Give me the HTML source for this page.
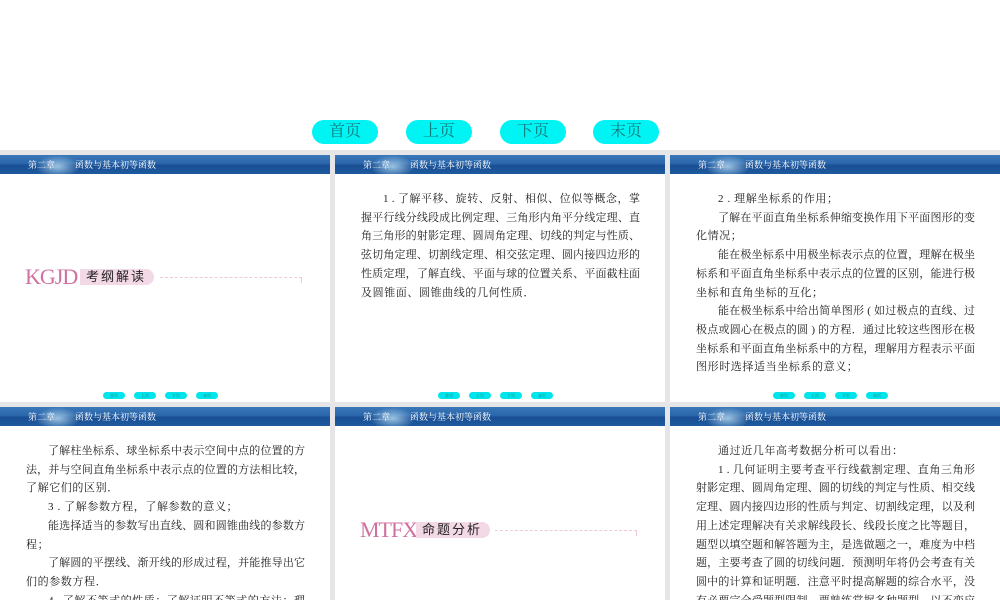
<!DOCTYPE html>
<html><head><meta charset="utf-8"><style>
*{margin:0;padding:0;box-sizing:border-box}
body{width:1000px;height:600px;background:#fff;position:relative;overflow:hidden;font-family:"Liberation Serif","Noto Serif CJK SC",serif}
.grey{position:absolute;left:0;top:150px;width:1000px;height:450px;background:#e6e6e8}
.btn{position:absolute;top:120px;width:66px;height:24px;border-radius:12px;background:#00f4f4;color:#107878;font-size:16px;text-align:center;line-height:24px;font-family:"Liberation Serif","Noto Serif CJK SC",serif}
.p{position:absolute;width:330px;background:#fff;overflow:hidden}
.bar{height:19px;background:linear-gradient(#3a78b8 0%,#2a66aa 45%,#1a4f94 55%,#1e5a9e 100%);position:relative}
.bar .s{position:absolute;left:35px;top:0;width:45px;height:19px;background:radial-gradient(ellipse at 50% 60%,rgba(190,225,245,.8),rgba(120,180,225,0) 70%)}
.bar span{position:absolute;top:5px;color:#fff;font-size:9px;line-height:11px;white-space:nowrap;font-family:"Liberation Serif","Noto Serif CJK SC",serif}
.t{padding:16px 25px 0 26px;font-size:11px;line-height:18.7px;letter-spacing:0;color:#222;font-family:"Liberation Serif","Noto Serif CJK SC",serif}
.t div{text-align:justify;text-align-last:justify;white-space:nowrap;overflow:visible}
.t .i{padding-left:22px}
.t .e{text-align-last:left;letter-spacing:.6px}
.sb{position:absolute;top:237px;width:22px;height:7px;border-radius:4px;background:#00e4ec;font-size:4px;color:#177;text-align:center;line-height:7px}
.h{position:absolute;left:25px;height:20px;width:290px}
.h .l{position:absolute;left:0;top:-3px;font-size:22px;color:#d070a0;font-family:"Liberation Serif",serif;letter-spacing:-1px;white-space:nowrap}
.h .c{position:absolute;top:2px;height:16px;padding:0 8px 0 6px;background:#f3d8e6;border-radius:0 8px 8px 0;font-size:13px;line-height:16px;color:#222;letter-spacing:2px;white-space:nowrap;font-family:"Liberation Sans","Noto Sans CJK SC",sans-serif}
.h .d{position:absolute;top:10px;left:135px;width:142px;border-top:1px dashed #f0c8dc;height:6px;border-right:1px dashed #f0c8dc}
</style></head><body>
<div class="btn" style="left:312px">首页</div>
<div class="btn" style="left:406px">上页</div>
<div class="btn" style="left:500px">下页</div>
<div class="btn" style="left:593px">末页</div>
<div class="grey"></div>

<div class="p" style="left:0;top:155px;height:247px">
<div class="bar"><div class="s"></div><span style="left:28px">第二章</span><span style="left:75px">函数与基本初等函数</span></div>
<div class="h" style="top:112px"><span class="l">KGJD</span><span class="c" style="left:55px">考纲解读</span><span class="d"></span></div>
<div class="sb" style="left:103px">首页</div><div class="sb" style="left:134px">上页</div><div class="sb" style="left:165px">下页</div><div class="sb" style="left:196px">末页</div>
</div>

<div class="p" style="left:335px;top:155px;height:247px">
<div class="bar"><div class="s"></div><span style="left:28px">第二章</span><span style="left:75px">函数与基本初等函数</span></div>
<div class="t">
<div class="i">1 . 了解平移、旋转、反射、相似、位似等概念，掌</div>
<div>握平行线分线段成比例定理、三角形内角平分线定理、直</div>
<div>角三角形的射影定理、圆周角定理、切线的判定与性质、</div>
<div>弦切角定理、切割线定理、相交弦定理、圆内接四边形的</div>
<div>性质定理，了解直线、平面与球的位置关系、平面截柱面</div>
<div class="e">及圆锥面、圆锥曲线的几何性质．</div>
</div>
<div class="sb" style="left:103px">首页</div><div class="sb" style="left:134px">上页</div><div class="sb" style="left:165px">下页</div><div class="sb" style="left:196px">末页</div>
</div>

<div class="p" style="left:670px;top:155px;height:247px">
<div class="bar"><div class="s"></div><span style="left:28px">第二章</span><span style="left:75px">函数与基本初等函数</span></div>
<div class="t">
<div class="i e">2 . 理解坐标系的作用；</div>
<div class="i">了解在平面直角坐标系伸缩变换作用下平面图形的变</div>
<div class="e">化情况；</div>
<div class="i">能在极坐标系中用极坐标表示点的位置，理解在极坐</div>
<div>标系和平面直角坐标系中表示点的位置的区别，能进行极</div>
<div class="e">坐标和直角坐标的互化；</div>
<div class="i">能在极坐标系中给出简单图形 ( 如过极点的直线、过</div>
<div>极点或圆心在极点的圆 ) 的方程．通过比较这些图形在极</div>
<div>坐标系和平面直角坐标系中的方程，理解用方程表示平面</div>
<div class="e">图形时选择适当坐标系的意义；</div>
</div>
<div class="sb" style="left:103px">首页</div><div class="sb" style="left:134px">上页</div><div class="sb" style="left:165px">下页</div><div class="sb" style="left:196px">末页</div>
</div>

<div class="p" style="left:0;top:407px;height:193px">
<div class="bar"><div class="s"></div><span style="left:28px">第二章</span><span style="left:75px">函数与基本初等函数</span></div>
<div class="t">
<div class="i">了解柱坐标系、球坐标系中表示空间中点的位置的方</div>
<div>法，并与空间直角坐标系中表示点的位置的方法相比较，</div>
<div class="e">了解它们的区别．</div>
<div class="i e">3 . 了解参数方程，了解参数的意义；</div>
<div class="i">能选择适当的参数写出直线、圆和圆锥曲线的参数方</div>
<div class="e">程；</div>
<div class="i">了解圆的平摆线、渐开线的形成过程，并能推导出它</div>
<div class="e">们的参数方程．</div>
<div class="i">4 . 了解不等式的性质；了解证明不等式的方法；理</div>
<div>解绝对值的几何意义，并能利用绝对值不等式的几何意义</div>
</div>
</div>

<div class="p" style="left:335px;top:407px;height:193px">
<div class="bar"><div class="s"></div><span style="left:28px">第二章</span><span style="left:75px">函数与基本初等函数</span></div>
<div class="h" style="top:113px"><span class="l">MTFX</span><span class="c" style="left:56px">命题分析</span><span class="d"></span></div>
</div>

<div class="p" style="left:670px;top:407px;height:193px">
<div class="bar"><div class="s"></div><span style="left:28px">第二章</span><span style="left:75px">函数与基本初等函数</span></div>
<div class="t">
<div class="i e">通过近几年高考数据分析可以看出：</div>
<div class="i">1 . 几何证明主要考查平行线截割定理、直角三角形</div>
<div>射影定理、圆周角定理、圆的切线的判定与性质、相交线</div>
<div>定理、圆内接四边形的性质与判定、切割线定理，以及利</div>
<div>用上述定理解决有关求解线段长、线段长度之比等题目，</div>
<div>题型以填空题和解答题为主，是选做题之一，难度为中档</div>
<div>题，主要考查了圆的切线问题．预测明年将仍会考查有关</div>
<div>圆中的计算和证明题．注意平时提高解题的综合水平，没</div>
<div>有必要完全受题型限制，要熟练掌握多种题型，以不变应</div>
<div class="e">万变．</div>
</div>
</div>
</body></html>
